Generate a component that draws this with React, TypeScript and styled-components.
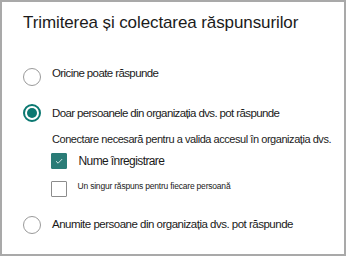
import React from "react";
import styled, { createGlobalStyle } from "styled-components";

const Global = createGlobalStyle`
  html, body { margin: 0; padding: 0; background: #ffffff; }
  body { font-family: "Liberation Sans", Arial, sans-serif; }
`;

const Frame = styled.div`
  box-sizing: border-box;
  width: 346px;
  height: 256px;
  border: 2px solid #a9a9a9;
  background: #fff;
  display: flex;
  flex-direction: column;
  padding-left: 21px;
  color: #1f1f1f;
`;

const Title = styled.div`
  margin-top: 11px;
  font-size: 17px;
  line-height: 20px;
  color: #1b1b1b;
  letter-spacing: -0.1px;
`;

const Row = styled.div<{ $top: number }>`
  display: flex;
  align-items: center;
  height: 20px;
  margin-top: ${(p) => p.$top}px;
`;

const Radio = styled.span<{ $on?: boolean; $shift?: number }>`
  box-sizing: border-box;
  width: 18px;
  height: 18px;
  border-radius: 50%;
  flex: none;
  border: ${(p) => (p.$on ? "2px solid #0b7871" : "1px solid #9a9a9a")};
  background: ${(p) => (p.$on ? "#0b7871" : "#fff")};
  transform: translateY(${(p) => p.$shift ?? 0}px);
  display: flex;
  align-items: center;
  justify-content: center;
  &::after {
    content: "";
    display: ${(p) => (p.$on ? "block" : "none")};
    width: 10px;
    height: 10px;
    border-radius: 50%;
    background: #0b7871;
    box-shadow: 0 0 0 2px #fff;
  }
`;

const Label = styled.span<{ $shift?: number; $ls?: number }>`
  margin-left: 11px;
  font-size: 11.5px;
  line-height: 16px;
  letter-spacing: ${(p) => p.$ls ?? -0.5}px;
  color: #1a1a1a;
  transform: translateY(${(p) => p.$shift ?? 0}px);
  white-space: nowrap;
`;

const Sub = styled.div`
  margin-top: 9.5px;
  margin-left: 29px;
  font-size: 11px;
  line-height: 14px;
  letter-spacing: -0.45px;
  color: #222;
  white-space: nowrap;
`;

const CheckRow = styled.div<{ $top: number }>`
  display: flex;
  align-items: center;
  height: 16px;
  margin-top: ${(p) => p.$top}px;
  margin-left: 27.5px;
`;

const Box = styled.span<{ $on?: boolean }>`
  box-sizing: border-box;
  width: 16px;
  height: 16px;
  flex: none;
  border-radius: 1px;
  border: 1px solid ${(p) => (p.$on ? "#2a7c77" : "#8c8c8c")};
  background: ${(p) => (p.$on ? "#2a7c77" : "#fff")};
  display: flex;
  align-items: center;
  justify-content: center;
`;

const CheckText = styled.span<{ $small?: boolean }>`
  margin-left: ${(p) => (p.$small ? 11 : 12)}px;
  font-size: ${(p) => (p.$small ? 8.5 : 12)}px;
  line-height: ${(p) => (p.$small ? 10 : 16)}px;
  letter-spacing: ${(p) => (p.$small ? "-0.2px" : "-0.6px")};
  color: #1a1a1a;
  white-space: nowrap;
  align-self: ${(p) => (p.$small ? "flex-start" : "center")};
`;

export default function App() {
  return (
    <>
      <Global />
      <Frame>
        <Title>Trimiterea și colectarea răspunsurilor</Title>
        <Row $top={31.5}>
          <Radio $shift={2} />
          <Label $shift={-2} $ls={-0.6}>Oricine poate răspunde</Label>
        </Row>
        <Row $top={18}>
          <Radio $on />
          <Label $ls={-0.62}>Doar persoanele din organizația dvs. pot răspunde</Label>
        </Row>
        <Sub>Conectare necesară pentru a valida accesul în organizația dvs.</Sub>
        <CheckRow $top={7}>
          <Box $on>
            <svg width="10" height="10" viewBox="0 0 10 10">
              <path d="M2 5.2 L4.1 7.2 L8.2 3" fill="none" stroke="#cfe6e4" strokeWidth="1" />
            </svg>
          </Box>
          <CheckText>Nume înregistrare</CheckText>
        </CheckRow>
        <CheckRow $top={12}>
          <Box />
          <CheckText $small>Un singur răspuns pentru fiecare persoană</CheckText>
        </CheckRow>
        <Row $top={17.5}>
          <Radio />
          <Label $shift={-1}>Anumite persoane din organizația dvs. pot răspunde</Label>
        </Row>
      </Frame>
    </>
  );
}
